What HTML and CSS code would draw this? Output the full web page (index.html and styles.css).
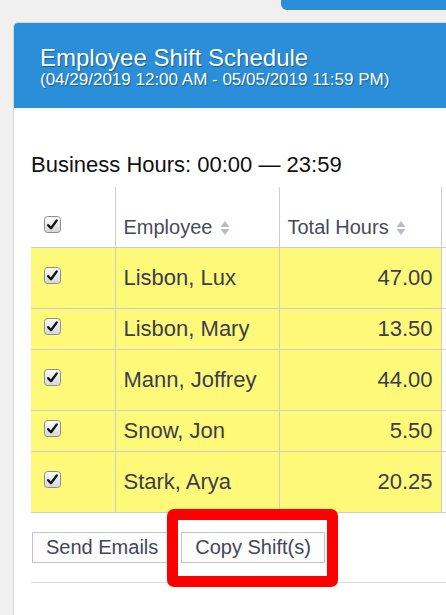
FILE: index.html
```html
<!DOCTYPE html>
<html lang="en">
<head>
    <meta charset="UTF-8">
    <meta name="viewport" content="width=device-width, initial-scale=1.0">
    <title>Employee Shift Schedule</title>
    <link rel="stylesheet" href="styles.css">
</head>
<body>
    <div class="top-tab"></div>

    <div class="panel">
        <div class="panel-head">
            <div class="panel-title">Employee Shift Schedule</div>
            <div class="panel-sub">(04/29/2019 12:00 AM - 05/05/2019 11:59 PM)</div>
        </div>

        <div class="panel-body">
            <div class="hours">Business Hours: 00:00 &mdash; 23:59</div>

            <table class="shifts">
                <colgroup>
                    <col class="c-check">
                    <col class="c-name">
                    <col class="c-hours">
                    <col class="c-more">
                </colgroup>
                <thead>
                    <tr>
                        <th class="cell-check"><span class="cbox"></span></th>
                        <th>Employee <span class="sort"></span></th>
                        <th>Total Hours <span class="sort"></span></th>
                        <th></th>
                    </tr>
                </thead>
                <tbody id="list"></tbody>
            </table>

            <div class="actions">
                <button class="btn">Send Emails</button>
                <span class="mark-wrap">
                    <button class="btn">Copy Shift(s)</button>
                    <span class="mark"></span>
                </span>
            </div>
            <hr class="rule">
        </div>
    </div>

    <script>
        var shifts = [
            { name: "Lisbon, Lux", hours: "47.00", tall: true },
            { name: "Lisbon, Mary", hours: "13.50", tall: false },
            { name: "Mann, Joffrey", hours: "44.00", tall: true },
            { name: "Snow, Jon", hours: "5.50", tall: false },
            { name: "Stark, Arya", hours: "20.25", tall: true }
        ];

        // checkbox and sort arrows are drawn, not native controls
        var checkSvg = '<svg width="17" height="17" viewBox="0 0 17 17">' +
            '<defs><linearGradient id="g" x1="0" y1="0" x2="0" y2="1">' +
            '<stop offset="0" stop-color="#fdfdfd"/><stop offset="1" stop-color="#d6d6d6"/></linearGradient></defs>' +
            '<rect x="0.5" y="0.5" width="16" height="16" rx="3" fill="url(#g)" stroke="#8e8e8e"/>' +
            '<path d="M4.2 9.2 L7 12.2 L12.8 4.4" fill="none" stroke="#111" stroke-width="2.4" stroke-linecap="round" stroke-linejoin="round"/>' +
            '</svg>';
        var sortSvg = '<svg width="10" height="16" viewBox="0 0 10 16">' +
            '<path d="M5 1 L9.5 7 L0.5 7 Z" fill="#b9bcc6"/>' +
            '<path d="M5 15 L9.5 9 L0.5 9 Z" fill="#b9bcc6"/>' +
            '</svg>';

        document.querySelectorAll(".cbox").forEach(function(el) { el.innerHTML = checkSvg; });
        document.querySelectorAll(".sort").forEach(function(el) { el.innerHTML = sortSvg; });

        var tbody = document.getElementById("list");
        shifts.forEach(function(item) {
            tbody.innerHTML += `<tr class="${item.tall ? "tall" : "short"}">
                <td class="cell-check"><span class="cbox">${checkSvg}</span></td>
                <td>${item.name}</td>
                <td class="num">${item.hours}</td>
                <td class="blank"></td>
            </tr>`;
        });
    </script>
</body>
</html>
```

FILE: styles.css
```css
body {
    margin: 0;
    background-color: #f0f0f0;
    font-family: "Liberation Sans", Arial, sans-serif;
    overflow: hidden;
}
.top-tab {
    width: 165px;
    height: 10px;
    margin-left: auto;
    background-color: #2a8fd8;
    border-bottom-left-radius: 6px;
}
.panel {
    margin: 12px 0 0 13px;
    background: white;
    border-top: 1px solid #d6d6d6;
    border-left: 1px solid #d6d6d6;
    border-top-left-radius: 5px;
    overflow: hidden;
    height: 600px;
}
.panel-head {
    height: 85px;
    box-sizing: border-box;
    padding: 22px 0 0 26px;
    background-color: #2a8fd8;
    color: white;
    text-shadow: 1px 1px 1px rgba(0,0,0,0.35);
}
.panel-title {
    font-size: 24px;
    line-height: 26px;
}
.panel-sub {
    font-size: 17px;
    line-height: 18px;
}
.panel-body {
    padding-left: 17px;
}
.hours {
    margin-top: 44px;
    font-size: 22px;
    line-height: 26px;
    color: #111;
}
.shifts {
    margin-top: 9px;
    width: 510px;
    table-layout: fixed;
    border-collapse: collapse;
    color: #3c3d4c;
}
.c-check { width: 84px; }
.c-name { width: 164px; }
.c-hours { width: 162px; }
.c-more { width: 100px; }
thead tr { height: 60px; }
tr.tall { height: 61px; }
tr.short { height: 41px; }
th {
    padding: 0 8px 8px;
    text-align: left;
    vertical-align: bottom;
    font-size: 20px;
    line-height: 24px;
    font-weight: normal;
    color: #474a5a;
    border-bottom: 1px solid #cdcdcd;
}
th + th, td + td {
    border-left: 1px solid #cdcdcd;
}
td {
    padding: 0 8px;
    font-size: 22px;
    line-height: 26px;
    background-color: #fff97a;
    border-bottom: 1px solid #cdcdcd;
    vertical-align: middle;
}
td.blank {
    background-color: white;
}
.num {
    text-align: right;
}
.cell-check {
    padding-left: 13px;
}
td.cell-check {
    padding-bottom: 7px;
}
th.cell-check {
    padding-bottom: 12px;
}
.cbox {
    display: inline-block;
    width: 17px;
    height: 17px;
    vertical-align: middle;
}
.cbox svg {
    display: block;
}
.sort {
    display: inline-block;
    width: 10px;
    height: 16px;
    margin-left: 2px;
    vertical-align: -2px;
}
.sort svg {
    display: block;
}
.actions {
    display: flex;
    gap: 9px;
    margin: 19px 0 0 1px;
}
.btn {
    height: 31px;
    padding: 0 13px;
    font-family: "Liberation Sans", Arial, sans-serif;
    font-size: 20px;
    color: #42475a;
    background-color: #fcfcfc;
    border: 1px solid #c4c4c4;
    border-radius: 0;
}
.mark-wrap {
    position: relative;
    display: inline-block;
}
.mark {
    position: absolute;
    left: -14px;
    top: -23px;
    width: 171px;
    height: 78px;
    box-sizing: border-box;
    border: 11px solid #ff0000;
    border-radius: 7px;
}
.rule {
    margin: 19px 0 0;
    border: none;
    border-top: 1px solid #dcdcdc;
}
```
